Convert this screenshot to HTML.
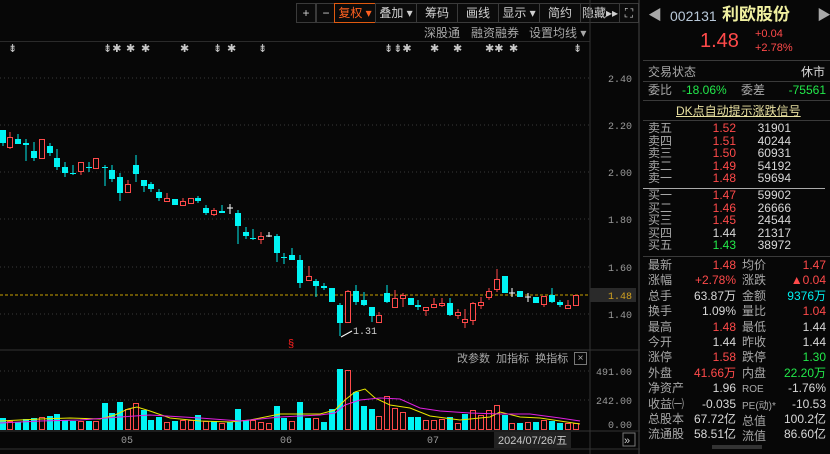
<!DOCTYPE html><html><head><meta charset="utf-8"><style>
body{margin:0;width:830px;height:454px;background:#070707;overflow:hidden;font-family:"Liberation Sans","Noto Sans CJK SC",sans-serif;position:relative}
.t{position:absolute;font-size:12px;white-space:nowrap;line-height:14px}
.g{color:#a8a8a8}.w{color:#d8d8d8}.r{color:#ff4a4a}.gr{color:#22e84a}.cy{color:#00f0f0}
.R{text-align:right}
.hl{position:absolute;left:643px;width:187px;height:1px;background:#3a3a3a}
.tb{position:absolute;top:3px;height:18px;border:1px solid #3a3a3a;color:#d0d0d0;font-size:12px;line-height:18px;text-align:center;background:#0b0b0b}
</style></head><body>
<div class="tb" style="left:296px;width:18px">+</div>
<div class="tb" style="left:316px;width:18px">−</div>
<div class="tb" style="left:334px;width:40px;border-color:#e05a10;color:#ff6020">复权 ▾</div>
<div class="tb" style="left:375px;width:40px">叠加 ▾</div>
<div class="tb" style="left:416px;width:40px">筹码</div>
<div class="tb" style="left:457px;width:40px">画线</div>
<div class="tb" style="left:498px;width:40px">显示 ▾</div>
<div class="tb" style="left:539px;width:40px">简约</div>
<div class="tb" style="left:580px;width:38px">隐藏▸▸</div>
<div class="tb" style="left:619px;width:18px">⛶</div>
<div class="t g" style="left:424px;top:26px">深股通</div>
<div class="t g" style="left:471px;top:26px">融资融券</div>
<div class="t g" style="left:529px;top:26px">设置均线 ▾</div>
<div style="position:absolute;left:0;top:41px;width:590px;height:1px;background:#2a2a2a"></div>
<svg style="position:absolute;left:0;top:0" width="640" height="454">
<g fill="#c8c8c8" font-size="11" font-family="Liberation Sans">
<text x="8" y="52">⇟</text><text x="103" y="52">⇟✱</text><text x="126" y="52">✱</text><text x="141" y="52">✱</text><text x="180" y="52">✱</text><text x="213" y="52">⇟</text><text x="227" y="52">✱</text><text x="258" y="52">⇟</text><text x="384" y="52">⇟⇟✱</text><text x="430" y="52">✱</text><text x="453" y="52">✱</text><text x="485" y="52">✱✱</text><text x="509" y="52">✱</text><text x="573" y="52">⇟</text>
</g>
<g stroke="#3a3a3a" stroke-dasharray="1,3"><line x1="0" x2="590" y1="78" y2="78"/><line x1="0" x2="590" y1="125" y2="125"/><line x1="0" x2="590" y1="172" y2="172"/><line x1="0" x2="590" y1="219" y2="219"/><line x1="0" x2="590" y1="267" y2="267"/><line x1="0" x2="590" y1="314" y2="314"/><line x1="0" x2="590" y1="371" y2="371"/><line x1="0" x2="590" y1="400" y2="400"/></g>
<line x1="590" y1="0" x2="590" y2="454" stroke="#333"/><line x1="639" y1="0" x2="639" y2="454" stroke="#444"/>
<line x1="0" y1="350" x2="640" y2="350" stroke="#333"/><line x1="0" y1="431" x2="640" y2="431" stroke="#333"/>
<line x1="0" y1="295" x2="590" y2="295" stroke="#c8a000" stroke-dasharray="3,2"/>
<rect x="590" y="288" width="46" height="14" fill="#2a2a2a"/>
<g font-size="10" fill="#9a9a9a" font-family="Liberation Mono" text-anchor="end"><text x="632" y="82">2.40</text><text x="632" y="129">2.20</text><text x="632" y="176">2.00</text><text x="632" y="223">1.80</text><text x="632" y="271">1.60</text><text x="632" y="318">1.40</text><text x="632" y="299" fill="#d0a020">1.48</text><text x="632" y="375">491.00</text><text x="632" y="404">242.00</text><text x="632" y="428">0.00</text></g>
<g>
<g stroke="#00e8e8" stroke-width="1">
<line x1="3" y1="130" x2="3" y2="146"/><line x1="18" y1="134" x2="18" y2="144"/><line x1="26" y1="139" x2="26" y2="161"/><line x1="34" y1="142" x2="34" y2="161"/><line x1="50" y1="143" x2="50" y2="156"/><line x1="57" y1="149" x2="57" y2="170"/><line x1="65" y1="162" x2="65" y2="177"/><line x1="73" y1="165" x2="73" y2="175"/><line x1="89" y1="162" x2="89" y2="172"/><line x1="105" y1="165" x2="105" y2="186"/><line x1="112" y1="165" x2="112" y2="182"/><line x1="120" y1="173" x2="120" y2="201"/><line x1="136" y1="155" x2="136" y2="182"/><line x1="144" y1="180" x2="144" y2="192"/><line x1="151" y1="182" x2="151" y2="192"/><line x1="159" y1="189" x2="159" y2="201"/><line x1="198" y1="196" x2="198" y2="203"/><line x1="206" y1="205" x2="206" y2="215"/><line x1="222" y1="205" x2="222" y2="213"/><line x1="238" y1="210" x2="238" y2="244"/><line x1="246" y1="227" x2="246" y2="239"/><line x1="253" y1="229" x2="253" y2="240"/><line x1="277" y1="234" x2="277" y2="262"/><line x1="284" y1="253" x2="284" y2="264"/><line x1="292" y1="248" x2="292" y2="260"/><line x1="300" y1="255" x2="300" y2="288"/><line x1="316" y1="279" x2="316" y2="297"/><line x1="324" y1="283" x2="324" y2="290"/><line x1="340" y1="303" x2="340" y2="336"/><line x1="356" y1="285" x2="356" y2="305"/><line x1="364" y1="292" x2="364" y2="306"/><line x1="372" y1="307" x2="372" y2="322"/><line x1="387" y1="285" x2="387" y2="303"/><line x1="418" y1="300" x2="418" y2="310"/><line x1="450" y1="298" x2="450" y2="316"/><line x1="552" y1="288" x2="552" y2="303"/><line x1="560" y1="300" x2="560" y2="307"/>
</g>
<g fill="#00f4f4">
<rect x="0" y="130" width="6" height="13"/><rect x="15" y="139" width="6" height="5"/><rect x="23" y="143" width="6" height="2"/><rect x="31" y="151" width="6" height="7"/><rect x="47" y="146" width="6" height="7"/><rect x="54" y="158" width="6" height="9"/><rect x="62" y="167" width="6" height="6"/><rect x="70" y="173" width="6" height="1"/><rect x="86" y="167" width="6" height="1"/><rect x="102" y="167" width="6" height="1"/><rect x="109" y="170" width="6" height="9"/><rect x="117" y="177" width="6" height="16"/><rect x="133" y="165" width="6" height="9"/><rect x="141" y="180" width="6" height="6"/><rect x="148" y="184" width="6" height="5"/><rect x="156" y="192" width="6" height="6"/><rect x="172" y="199" width="6" height="6"/><rect x="195" y="198" width="6" height="3"/><rect x="203" y="208" width="6" height="5"/><rect x="219" y="211" width="6" height="2"/><rect x="235" y="213" width="6" height="13"/><rect x="243" y="232" width="6" height="4"/><rect x="250" y="238" width="6" height="1"/><rect x="274" y="236" width="6" height="17"/><rect x="281" y="257" width="6" height="1"/><rect x="289" y="255" width="6" height="5"/><rect x="297" y="260" width="6" height="23"/><rect x="313" y="281" width="6" height="5"/><rect x="321" y="286" width="6" height="2"/><rect x="329" y="288" width="6" height="14"/><rect x="337" y="305" width="6" height="18"/><rect x="353" y="291" width="6" height="11"/><rect x="361" y="300" width="6" height="5"/><rect x="369" y="307" width="6" height="9"/><rect x="384" y="293" width="6" height="9"/><rect x="408" y="298" width="6" height="7"/><rect x="415" y="305" width="6" height="2"/><rect x="447" y="303" width="6" height="12"/><rect x="502" y="276" width="6" height="17"/><rect x="517" y="291" width="6" height="6"/><rect x="533" y="297" width="6" height="6"/><rect x="549" y="295" width="6" height="7"/><rect x="557" y="302" width="6" height="3"/>
</g>
<g stroke="#ff4a4a" fill="none">
<line x1="10" y1="132" x2="10" y2="149"/><line x1="81" y1="162" x2="81" y2="175"/><line x1="128" y1="180" x2="128" y2="193"/><line x1="167" y1="193" x2="167" y2="201"/><line x1="183" y1="198" x2="183" y2="205"/><line x1="214" y1="208" x2="214" y2="216"/><line x1="261" y1="232" x2="261" y2="244"/><line x1="309" y1="266" x2="309" y2="280"/><line x1="348" y1="290" x2="348" y2="323"/><line x1="379" y1="312" x2="379" y2="323"/><line x1="395" y1="290" x2="395" y2="307"/><line x1="403" y1="293" x2="403" y2="307"/><line x1="426" y1="307" x2="426" y2="316"/><line x1="434" y1="298" x2="434" y2="308"/><line x1="442" y1="298" x2="442" y2="307"/><line x1="458" y1="309" x2="458" y2="319"/><line x1="465" y1="309" x2="465" y2="328"/><line x1="473" y1="302" x2="473" y2="325"/><line x1="481" y1="297" x2="481" y2="309"/><line x1="489" y1="288" x2="489" y2="300"/><line x1="497" y1="269" x2="497" y2="292"/><line x1="544" y1="296" x2="544" y2="307"/><line x1="568" y1="300" x2="568" y2="308"/>
<rect x="7.5" y="137.5" width="5" height="10" fill="#070707"/><rect x="39.5" y="139.5" width="5" height="19" fill="#070707"/><rect x="78.5" y="162.5" width="5" height="9" fill="#070707"/><rect x="93.5" y="158.5" width="5" height="10" fill="#070707"/><rect x="125.5" y="184.5" width="5" height="8" fill="#070707"/><rect x="164.5" y="198.5" width="5" height="3" fill="#070707"/><rect x="180.5" y="201.5" width="5" height="4" fill="#070707"/><rect x="188.5" y="198.5" width="5" height="5" fill="#070707"/><rect x="211.5" y="210.5" width="5" height="4" fill="#070707"/><rect x="258.5" y="236.5" width="5" height="3" fill="#070707"/><rect x="306.5" y="276.5" width="5" height="4" fill="#070707"/><rect x="345.5" y="291.5" width="5" height="31" fill="#070707"/><rect x="376.5" y="315.5" width="5" height="7" fill="#070707"/><rect x="392.5" y="298.5" width="5" height="9" fill="#070707"/><rect x="400.5" y="295.5" width="5" height="3" fill="#070707"/><rect x="423.5" y="307.5" width="5" height="3" fill="#070707"/><rect x="431.5" y="304.5" width="5" height="3" fill="#070707"/><rect x="439.5" y="303.5" width="5" height="2" fill="#070707"/><rect x="455.5" y="312.5" width="5" height="3" fill="#070707"/><rect x="462.5" y="319.5" width="5" height="3" fill="#070707"/><rect x="470.5" y="303.5" width="5" height="17" fill="#070707"/><rect x="478.5" y="302.5" width="5" height="3" fill="#070707"/><rect x="486.5" y="291.5" width="5" height="6" fill="#070707"/><rect x="494.5" y="279.5" width="5" height="10" fill="#070707"/><rect x="541.5" y="296.5" width="5" height="8" fill="#070707"/><rect x="565.5" y="305.5" width="5" height="3" fill="#070707"/><rect x="573.5" y="295.5" width="5" height="10" fill="#070707"/>
</g>
<g stroke="#fff"><line x1="227" y1="208" x2="233" y2="208"/><line x1="230" y1="204" x2="230" y2="214"/><line x1="266" y1="236" x2="272" y2="236"/><line x1="269" y1="232" x2="269" y2="237"/><line x1="509" y1="293" x2="515" y2="293"/><line x1="512" y1="288" x2="512" y2="297"/><line x1="525" y1="297" x2="531" y2="297"/><line x1="528" y1="293" x2="528" y2="302"/></g>
</g>
<line x1="341" y1="337" x2="352" y2="331" stroke="#fff"/><text x="353" y="334" font-size="10" fill="#d0d0d0" font-family="Liberation Mono">1.31</text>
<text x="288" y="347" font-size="11" fill="#ff2020">§</text>
<g fill="#00f4f4">
<rect x="0" y="418" width="6" height="12"/><rect x="15" y="422" width="6" height="8"/><rect x="23" y="419" width="6" height="11"/><rect x="31" y="418" width="6" height="12"/><rect x="47" y="416" width="6" height="14"/><rect x="54" y="414" width="6" height="16"/><rect x="62" y="420" width="6" height="10"/><rect x="70" y="421" width="6" height="9"/><rect x="86" y="421" width="6" height="9"/><rect x="102" y="403" width="6" height="27"/><rect x="109" y="413" width="6" height="17"/><rect x="117" y="402" width="6" height="28"/><rect x="141" y="410" width="6" height="20"/><rect x="148" y="420" width="6" height="10"/><rect x="156" y="417" width="6" height="13"/><rect x="172" y="421" width="6" height="9"/><rect x="195" y="415" width="6" height="15"/><rect x="211" y="421" width="6" height="9"/><rect x="227" y="422" width="6" height="8"/><rect x="235" y="409" width="6" height="21"/><rect x="243" y="420" width="6" height="10"/><rect x="274" y="406" width="6" height="24"/><rect x="281" y="418" width="6" height="12"/><rect x="297" y="402" width="6" height="28"/><rect x="305" y="418" width="6" height="12"/><rect x="321" y="422" width="6" height="8"/><rect x="329" y="409" width="6" height="21"/><rect x="337" y="369" width="6" height="61"/><rect x="353" y="392" width="6" height="38"/><rect x="361" y="406" width="6" height="24"/><rect x="369" y="409" width="6" height="21"/><rect x="408" y="417" width="6" height="13"/><rect x="415" y="417" width="6" height="13"/><rect x="447" y="417" width="6" height="13"/><rect x="462" y="414" width="6" height="16"/><rect x="502" y="415" width="6" height="15"/><rect x="517" y="423" width="6" height="7"/><rect x="533" y="422" width="6" height="8"/><rect x="549" y="421" width="6" height="9"/><rect x="557" y="423" width="6" height="7"/>
</g>
<g stroke="#ff4a4a" fill="none">
<rect x="7.5" y="421.5" width="5" height="8"/><rect x="39.5" y="417.5" width="5" height="12"/><rect x="78.5" y="421.5" width="5" height="8"/><rect x="93.5" y="421.5" width="5" height="8"/><rect x="125.5" y="409.5" width="5" height="20"/><rect x="133.5" y="403.5" width="5" height="26"/><rect x="164.5" y="422.5" width="5" height="7"/><rect x="180.5" y="420.5" width="5" height="9"/><rect x="188.5" y="420.5" width="5" height="9"/><rect x="203.5" y="421.5" width="5" height="8"/><rect x="219.5" y="423.5" width="5" height="6"/><rect x="250.5" y="420.5" width="5" height="9"/><rect x="258.5" y="422.5" width="5" height="7"/><rect x="266.5" y="423.5" width="5" height="6"/><rect x="289.5" y="421.5" width="5" height="8"/><rect x="313.5" y="418.5" width="5" height="11"/><rect x="345.5" y="370.5" width="5" height="59"/><rect x="376.5" y="416.5" width="5" height="13"/><rect x="384.5" y="396.5" width="5" height="33"/><rect x="392.5" y="408.5" width="5" height="21"/><rect x="400.5" y="412.5" width="5" height="17"/><rect x="423.5" y="420.5" width="5" height="9"/><rect x="431.5" y="420.5" width="5" height="9"/><rect x="439.5" y="419.5" width="5" height="10"/><rect x="455.5" y="423.5" width="5" height="6"/><rect x="470.5" y="410.5" width="5" height="19"/><rect x="478.5" y="415.5" width="5" height="14"/><rect x="486.5" y="410.5" width="5" height="19"/><rect x="494.5" y="405.5" width="5" height="24"/><rect x="509.5" y="423.5" width="5" height="6"/><rect x="525.5" y="422.5" width="5" height="7"/><rect x="541.5" y="420.5" width="5" height="9"/><rect x="565.5" y="423.5" width="5" height="6"/><rect x="573.5" y="423.5" width="5" height="6"/>
</g>
<polyline fill="none" stroke="#e8e800" points="0,421 40,419 70,418 100,419 115,415 128,409 137,407 150,411 170,418 200,421 230,422 250,420 280,414 300,414 320,414 335,410 345,400 355,392 365,389 375,398 390,405 410,408 430,416 460,420 490,417 500,412 520,417 540,418 560,421 580,424"/>
<polyline fill="none" stroke="#e020e0" points="0,423 40,421 80,420 120,417 150,415 200,418 240,421 280,417 320,415 335,413 345,405 360,400 380,398 400,399 420,408 440,411 470,413 500,414 530,414 560,418 580,421"/>
<g font-size="10" fill="#9a9a9a" font-family="Liberation Mono"><text x="121" y="443">05</text><text x="280" y="443">06</text><text x="427" y="443">07</text></g>
<rect x="494" y="432" width="77" height="16" fill="#222"/><text x="498" y="444" font-size="11" fill="#c8c8c8" font-family="Liberation Sans">2024/07/26/五</text>
<rect x="623" y="433" width="12" height="13" fill="none" stroke="#777"/><text x="624" y="444" font-size="11" fill="#ccc">»</text>
<line x1="0" y1="449" x2="640" y2="449" stroke="#333"/>
</svg>
<div class="t g" style="left:457px;top:352px;font-size:11px">改参数 &nbsp;加指标 &nbsp;换指标</div>
<div style="position:absolute;left:574px;top:352px;width:11px;height:11px;border:1px solid #777;color:#aaa;font-size:10px;line-height:11px;text-align:center">×</div>
<div class="t g" style="left:648px;top:8px;font-size:14px">◀</div><div class="t g" style="left:817px;top:8px;font-size:14px">▶</div>
<div class="t" style="left:670px;top:7px;font-size:14px;color:#b8c8d8;line-height:18px">002131</div>
<div class="t" style="left:722px;top:5px;font-size:17px;color:#f0f0a0;font-weight:bold;line-height:20px">利欧股份</div>
<div class="t r" style="left:700px;top:30px;font-size:20px;line-height:22px">1.48</div>
<div class="t r" style="left:755px;top:28px;font-size:11px;line-height:13px">+0.04</div>
<div class="t r" style="left:755px;top:42px;font-size:11px;line-height:13px">+2.78%</div>
<div class="hl" style="top:60px"></div>
<div class="t g" style="left:648px;top:65px">交易状态</div><div class="t w" style="left:801px;top:65px">休市</div>
<div class="hl" style="top:81px"></div>
<div class="t g" style="left:648px;top:83px">委比</div><div class="t gr" style="left:682px;top:83px">-18.06%</div><div class="t g" style="left:741px;top:83px">委差</div><div class="t gr R" style="left:770px;top:83px;width:56px">-75561</div>
<div class="hl" style="top:100px"></div>
<div class="t" style="left:676px;top:104px;color:#e8e0a0;text-decoration:underline">DK点自动提示涨跌信号</div>
<div class="hl" style="top:120px"></div>
<div class="t g" style="left:648px;top:122px;line-height:12.6px">卖五<br>卖四<br>卖三<br>卖二<br>卖一</div>
<div class="t r R" style="left:700px;top:122px;width:36px;line-height:12.6px">1.52<br>1.51<br>1.50<br>1.49<br>1.48</div>
<div class="t w R" style="left:750px;top:122px;width:41px;line-height:12.6px">31901<br>40244<br>60931<br>54192<br>59694</div>
<div style="position:absolute;left:643px;top:188px;width:182px;height:1px;background:#aaa"></div>
<div class="t g" style="left:648px;top:189px;line-height:12.6px">买一<br>买二<br>买三<br>买四<br>买五</div>
<div class="t R" style="left:700px;top:189px;width:36px;line-height:12.6px"><span class="r">1.47<br>1.46<br>1.45</span><br><span class="w">1.44</span><br><span class="gr">1.43</span></div>
<div class="t w R" style="left:750px;top:189px;width:41px;line-height:12.6px">59902<br>26666<br>24544<br>21317<br>38972</div>
<div class="hl" style="top:256px"></div>
<div class="t g" style="left:648px;top:258px;line-height:15.4px">最新<br>涨幅<br>总手<br>换手<br>最高<br>今开<br>涨停<br>外盘<br>净资产<br>收益㈠<br>总股本<br>流通股</div>
<div class="t R" style="left:675px;top:258px;width:61px;line-height:15.4px"><span class="r">1.48</span><br><span class="r">+2.78%</span><br><span class="w">63.87万</span><br><span class="w">1.09%</span><br><span class="r">1.48</span><br><span class="w">1.44</span><br><span class="r">1.58</span><br><span class="r">41.66万</span><br><span class="w">1.96</span><br><span class="w">-0.035</span><br><span class="w">67.72亿</span><br><span class="w">58.51亿</span></div>
<div class="t g" style="left:742px;top:258px;line-height:15.4px">均价<br>涨跌<br>金额<br>量比<br>最低<br>昨收<br>跌停<br>内盘<br><span style="font-size:10px">ROE</span><br><span style="font-size:10px">PE(动)*</span><br>总值<br>流值</div>
<div class="t R" style="left:765px;top:258px;width:61px;line-height:15.4px"><span class="r">1.47</span><br><span class="r">▲0.04</span><br><span class="cy">9376万</span><br><span class="r">1.04</span><br><span class="w">1.44</span><br><span class="w">1.44</span><br><span class="gr">1.30</span><br><span class="gr">22.20万</span><br><span class="w">-1.76%</span><br><span class="w">-10.53</span><br><span class="w">100.2亿</span><br><span class="w">86.60亿</span></div>
<div style="position:absolute;left:712px;top:445px;width:50px;height:4px;background:#333"></div>
</body></html>
